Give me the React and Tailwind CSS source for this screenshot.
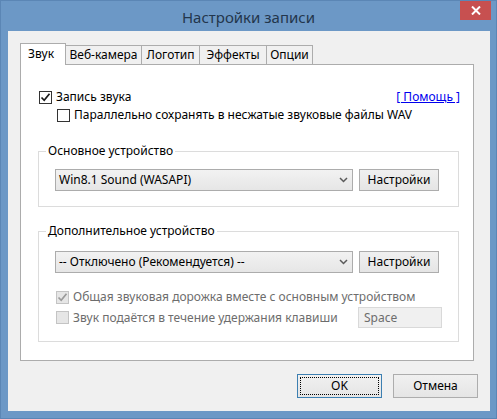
import React from "react";

function Check({ checked, disabled }) {
  return (
    <span
      className={
        disabled
          ? "w-[13px] h-[13px] border border-[#c4c4c4] bg-[#e6e6e6] flex items-center justify-center shrink-0"
          : "w-[13px] h-[13px] border border-[#333333] bg-white flex items-center justify-center shrink-0"
      }
    >
      {checked && (
        <svg width="11" height="11" viewBox="0 0 11 11">
          <path
            d="M1.5 5.5 L4.2 8.3 L9.5 1.8"
            stroke={disabled ? "#9a9a9a" : "#1a1a1a"}
            strokeWidth="1.7"
            fill="none"
          />
        </svg>
      )}
    </span>
  );
}

function Chevron() {
  return (
    <svg width="9" height="6" viewBox="0 0 9 6" className="shrink-0">
      <path d="M1 1 L4.5 4.5 L8 1" stroke="#5a5a5a" strokeWidth="1.5" fill="none" />
    </svg>
  );
}

function Combo({ text }) {
  return (
    <div className="w-[298px] h-[22px] border border-[#acacac] bg-gradient-to-b from-[#f2f2f2] to-[#e6e6e6] flex items-center pl-[3px] pr-[4px]">
      <span className="flex-1 text-black">{text}</span>
      <Chevron />
    </div>
  );
}

function Btn({ children, className }) {
  return (
    <div
      className={
        "h-[22px] border border-[#adadad] bg-gradient-to-b from-[#f0f0f0] to-[#e5e5e5] flex items-center justify-center text-black " +
        (className || "")
      }
    >
      {children}
    </div>
  );
}

export default function App() {
  return (
    <div className="w-[497px] h-[419px] bg-[#6c98c6] border border-[#5b86b5] flex flex-col font-['Noto_Sans',sans-serif] text-[12px] leading-[16px] text-black overflow-hidden">
      {/* title bar */}
      <div className="relative h-[30px] flex items-center justify-center shrink-0">
        <span className="text-[15px] text-[#23364c] mt-[1px]">Настройки записи</span>
        <div className="absolute right-[5px] top-[-1px] w-[31px] h-[20px] bg-[#c75050] flex items-center justify-center">
          <svg width="10" height="9" viewBox="0 0 10 9">
            <path d="M1 0.5 L9 8.5 M9 0.5 L1 8.5" stroke="#ffffff" strokeWidth="2" />
          </svg>
        </div>
      </div>

      {/* client */}
      <div className="ml-[7px] mr-[6px] h-[380px] bg-[#f0f0f0] flex flex-col shrink-0">
        {/* tabs */}
        <div className="flex items-end ml-[12px] mt-[12px] h-[21px]">
          <div className="relative z-10 w-[46px] h-[22px] -mb-[1px] border-l border-t border-r border-[#acacac] bg-white flex items-start pl-[7px] pt-[2px]">
            Звук
          </div>
          <div className="w-[76px] h-[19px] border-t border-r border-[#acacac] bg-[#f0f0f0] flex items-center justify-center">
            Веб-камера
          </div>
          <div className="w-[58px] h-[19px] border-t border-r border-[#acacac] bg-[#f0f0f0] flex items-center justify-center">
            Логотип
          </div>
          <div className="w-[67px] h-[19px] border-t border-r border-[#acacac] bg-[#f0f0f0] flex items-center justify-center">
            Эффекты
          </div>
          <div className="w-[46px] h-[19px] border-t border-r border-[#acacac] bg-[#f0f0f0] flex items-center justify-center">
            Опции
          </div>
        </div>

        {/* panel */}
        <div className="ml-[12px] w-[454px] h-[297px] border border-[#acacac] bg-white flex flex-col pt-[24px]">
          <div className="flex items-center h-[16px] ml-[18px] mr-[13px]">
            <Check checked />
            <span className="ml-[4px]">Запись звука</span>
            <span className="ml-auto text-[#0000ee] underline">[ Помощь ]</span>
          </div>
          <div className="flex items-center h-[16px] ml-[36px] mt-[2px]">
            <Check />
            <span className="ml-[4px]">Параллельно сохранять в несжатые звуковые файлы WAV</span>
          </div>

          <fieldset className="ml-[17px] w-[421px] mt-[20px] border border-[#dcdcdc] pl-[16px] pr-[18px] pt-[10px] pb-[15px]">
            <legend className="-ml-[9px] px-[2px] leading-[16px]">Основное устройство</legend>
            <div className="flex items-center gap-[6px]">
              <Combo text="Win8.1 Sound (WASAPI)" />
              <Btn className="w-[80px]">Настройки</Btn>
            </div>
          </fieldset>

          <fieldset className="ml-[17px] w-[421px] mt-[16px] border border-[#dcdcdc] pl-[16px] pr-[18px] pt-[12px] pb-[13px]">
            <legend className="-ml-[9px] px-[2px] leading-[16px]">Дополнительное устройство</legend>
            <div className="flex items-center gap-[6px]">
              <Combo text="-- Отключено (Рекомендуется) --" />
              <Btn className="w-[80px]">Настройки</Btn>
            </div>
            <div className="flex items-center h-[16px] mt-[16px] ml-[1px] text-[#6d6d6d]">
              <Check checked disabled />
              <span className="ml-[4px]">Общая звуковая дорожка вместе с основным устройством</span>
            </div>
            <div className="flex items-center h-[21px] mt-[2px] ml-[1px] text-[#6d6d6d]">
              <Check disabled />
              <span className="ml-[4px]">Звук подаётся в течение удержания клавиши</span>
              <div className="ml-auto -mr-[2px] w-[84px] h-[21px] border border-[#d9d9d9] bg-[#f0f0f0] flex items-center pl-[5px] text-[#6d6d6d]">
                Space
              </div>
            </div>
          </fieldset>
        </div>

        {/* bottom buttons */}
        <div className="flex justify-end gap-[11px] mr-[12px] mt-[13px]">
          <div className="w-[85px] h-[24px] border border-[#3c7fb1] bg-gradient-to-b from-[#f0f0f0] to-[#e5e5e5] p-[2px]">
            <div className="w-full h-full border border-dotted border-black flex items-center justify-center">
              OK
            </div>
          </div>
          <Btn className="w-[85px] h-[24px]">Отмена</Btn>
        </div>
      </div>
    </div>
  );
}
